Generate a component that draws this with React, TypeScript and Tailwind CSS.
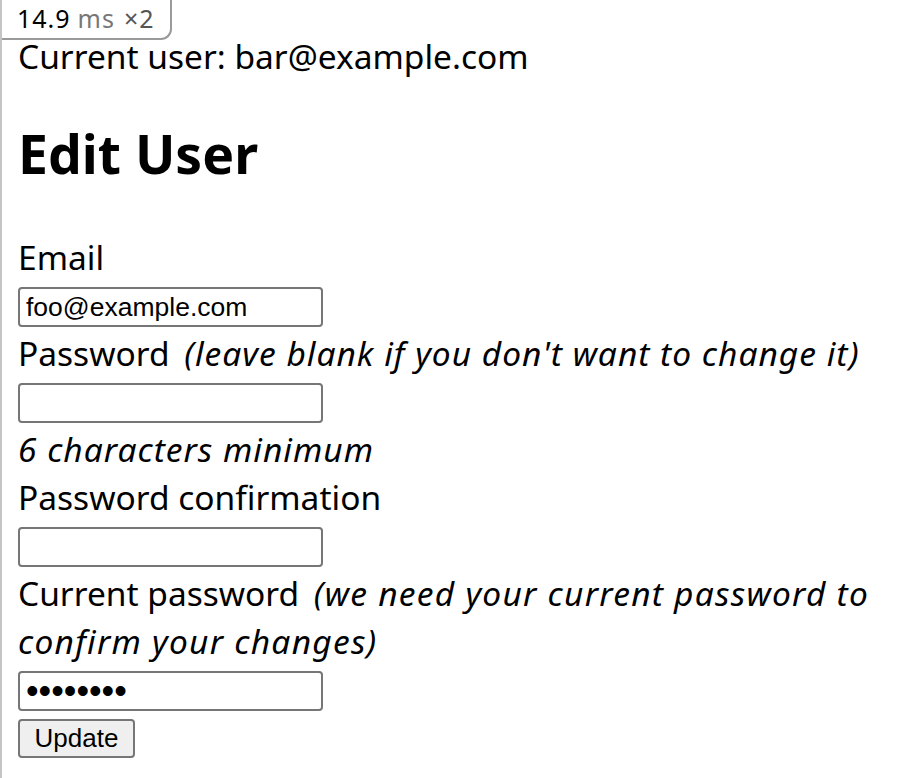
import React from "react";

const label = "block h-[48px] leading-[48px] whitespace-nowrap";
const inputCls =
  "block h-[40px] w-[305px] rounded-[4px] border-2 border-[#767676] bg-white px-[6px] text-black outline-none";
const ital = "italic tracking-[1px]";

export default function App() {
  return (
    <div
      className="relative min-h-[778px] w-[920px] border-l-2 border-[#c4c4c4] bg-white text-black"
      style={{ fontFamily: '"Noto Sans", sans-serif' }}
    >
      <div className="flex h-[40px] w-[170px] items-center rounded-br-[11px] border-b-2 border-r-2 border-[#9a9a9a] pl-[15px] text-[25px] tracking-[1px]">
        <span className="text-black">14.9</span>
        <span className="ml-[7px] text-[#777]">ms</span>
        <span className="ml-[9px] text-[#555]">×2</span>
      </div>
      <div className="px-[16px] text-[33.5px]">
        <div className="-mt-[8px] h-[48px] leading-[48px]">Current user: bar@example.com</div>
        <h1 className="mt-[44px] h-[60px] text-[53.5px] font-bold leading-[60px]">Edit User</h1>
        <form className="mt-[49px]" onSubmit={(e) => e.preventDefault()}>
          <div className={label}>Email</div>
          <div className="h-[48px] pt-[6px]">
            <input
              className={inputCls + " text-[26.5px]"}
              style={{ fontFamily: '"Liberation Sans", Arial, sans-serif' }}
              defaultValue="foo@example.com"
            />
          </div>
          <div className={label}>
            Password <span className={ital + " ml-[6px]"}>(leave blank if you don't want to change it)</span>
          </div>
          <div className="h-[48px] pt-[6px]">
            <input type="password" className={inputCls} />
          </div>
          <div className={label}>
            <span className={ital}>6 characters minimum</span>
          </div>
          <div className={label}>Password confirmation</div>
          <div className="h-[48px] pt-[6px]">
            <input type="password" className={inputCls} />
          </div>
          <div className={label}>
            Current password{" "}
            <span className="ml-[6px] italic tracking-[1.25px]">(we need your current password to</span>
          </div>
          <div className={label}>
            <span className="italic tracking-[1.25px]">confirm your changes)</span>
          </div>
          <div className="h-[48px] pt-[6px]">
            <input
              type="password"
              className={inputCls + " text-[36px] leading-[36px]"}
              style={{ fontFamily: '"Liberation Sans", Arial, sans-serif' }}
              defaultValue="password"
            />
          </div>
          <div className="h-[48px] pt-[6px]">
            <button
              type="submit"
              className="block h-[39px] w-[117px] rounded-[4px] border-2 border-[#767676] bg-[#efefef] text-[26px] leading-[35px] text-black"
              style={{ fontFamily: '"Liberation Sans", Arial, sans-serif' }}
            >
              Update
            </button>
          </div>
        </form>
      </div>
    </div>
  );
}
